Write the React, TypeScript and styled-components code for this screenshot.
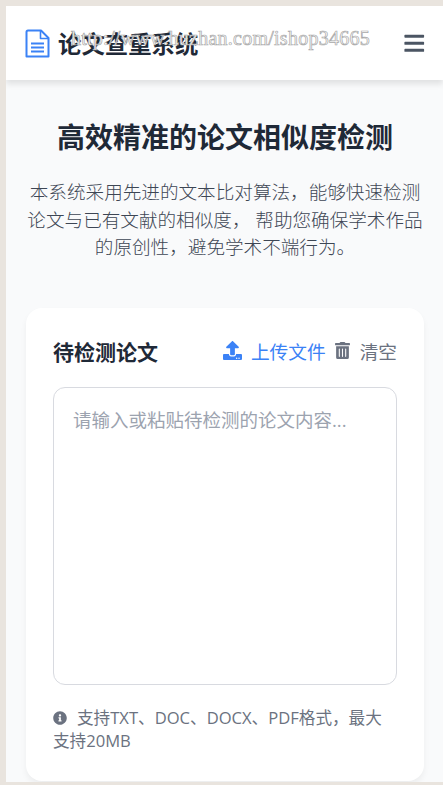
import React from "react";
import styled, { createGlobalStyle } from "styled-components";
import { FaBars, FaUpload, FaTrashAlt, FaInfoCircle } from "react-icons/fa";

const Global = createGlobalStyle`
  html, body { margin: 0; padding: 0; height: 100%; overflow: hidden; background: #e9e4de; }
  * { box-sizing: border-box; }
  #root { height: 785px; font-family: "Open Sans", "Noto Sans CJK SC", sans-serif; }
`;

const Frame = styled.div`
  position: relative;
  height: 785px;
  padding: 6px 0 3px 6px;
`;

const Page = styled.div`
  height: 776px;
  background: #f9fafb;
  overflow: hidden;
`;

const Header = styled.header`
  height: 74px;
  background: #fff;
  box-shadow: 0 4px 6px rgba(0, 0, 0, 0.1);
  display: flex;
  align-items: center;
  justify-content: space-between;
  padding: 0 18px 0 19px;
`;

const Brand = styled.div`
  display: flex;
  align-items: center;
  gap: 8px;
`;

const DocIcon = styled.svg`
  width: 25px;
  height: 29px;
  display: block;
`;

const BrandName = styled.span`
  color: #1f2937;
  font-size: 23.4px;
  font-weight: 700;
`;

const Menu = styled.div`
  color: #4b5563;
  font-size: 22.5px;
  display: flex;
`;

const Watermark = styled.div`
  position: absolute;
  left: 71px;
  top: 27px;
  font-family: "Liberation Serif", serif;
  font-size: 20px;
  letter-spacing: 0.25px;
  color: #fff;
  -webkit-text-stroke: 0.7px #a8a8a8;
  white-space: nowrap;
  pointer-events: none;
`;

const Main = styled.main`
  padding: 39px 19px 0 20px;
`;

const Hero = styled.section`
  text-align: center;
  margin: 0 -1px 47px;
`;

const Title = styled.h1`
  margin: 0 0 23px;
  color: #1f2937;
  font-size: 28px;
  line-height: 36px;
  font-weight: 700;
`;

const Lead = styled.p`
  margin: 0;
  color: #3d4654;
  font-size: 18.6px;
  line-height: 27.6px;
  font-weight: 300;
`;

const Card = styled.section`
  height: 473px;
  background: #fff;
  border-radius: 16px;
  box-shadow: 0 4px 6px rgba(0, 0, 0, 0.05);
  padding: 26px 27px 0;
`;

const CardHead = styled.div`
  display: flex;
  align-items: center;
  justify-content: space-between;
  height: 34px;
  margin-bottom: 19px;
`;

const CardTitle = styled.h2`
  margin: 0;
  color: #1f2937;
  font-size: 21px;
  font-weight: 700;
`;

const Actions = styled.div`
  display: flex;
  align-items: center;
  gap: 8px;
`;

const Action = styled.button<{ $color: string; $icon: number }>`
  display: flex;
  align-items: center;
  gap: 9px;
  padding: 0;
  border: 0;
  background: none;
  color: ${(p) => p.$color};
  font: inherit;
  font-size: 18.7px;
  svg { font-size: ${(p) => p.$icon}px; }
`;

const Editor = styled.textarea`
  display: block;
  width: 100%;
  height: 298px;
  padding: 18px 19px;
  border: 1px solid #d8dae0;
  border-radius: 12px;
  resize: none;
  outline: none;
  font: inherit;
  font-size: 18.5px;
  line-height: 27px;
  &::placeholder { color: #9ca3af; opacity: 1; }
`;

const Hint = styled.p`
  margin: 21px 0 0;
  color: #6b7280;
  font-size: 16.6px;
  line-height: 23px;
  svg { vertical-align: -1px; margin-right: 10px; font-size: 14px; }
`;

export default function App() {
  return (
    <Frame>
      <Global />
      <Page>
        <Header>
          <Brand>
            <DocIcon viewBox="0 0 25 29" fill="none" stroke="#3b82f6" strokeWidth="2" strokeLinejoin="round">
              <path d="M3 1.5H16L23.5 9V27.5H1.5V3Q1.5 1.5 3 1.5Z" />
              <path d="M15.5 2V9.5H23" strokeWidth="1.6" />
              <path d="M6 14.5H19M6 18.5H19M6 22.5H19" strokeWidth="1.8" />
            </DocIcon>
            <BrandName>论文查重系统</BrandName>
          </Brand>
          <Menu><FaBars /></Menu>
        </Header>
        <Main>
          <Hero>
            <Title>高效精准的论文相似度检测</Title>
            <Lead>本系统采用先进的文本比对算法，能够快速检测论文与已有文献的相似度， 帮助您确保学术作品的原创性，避免学术不端行为。</Lead>
          </Hero>
          <Card>
            <CardHead>
              <CardTitle>待检测论文</CardTitle>
              <Actions>
                <Action $color="#3b82f6" $icon={19}><FaUpload />上传文件</Action>
                <Action $color="#6b7280" $icon={17}><FaTrashAlt />清空</Action>
              </Actions>
            </CardHead>
            <Editor placeholder="请输入或粘贴待检测的论文内容..." />
            <Hint><FaInfoCircle />支持TXT、DOC、DOCX、PDF格式，最大支持20MB</Hint>
          </Card>
        </Main>
      </Page>
      <Watermark>http://www.huzhan.com/ishop34665</Watermark>
    </Frame>
  );
}
